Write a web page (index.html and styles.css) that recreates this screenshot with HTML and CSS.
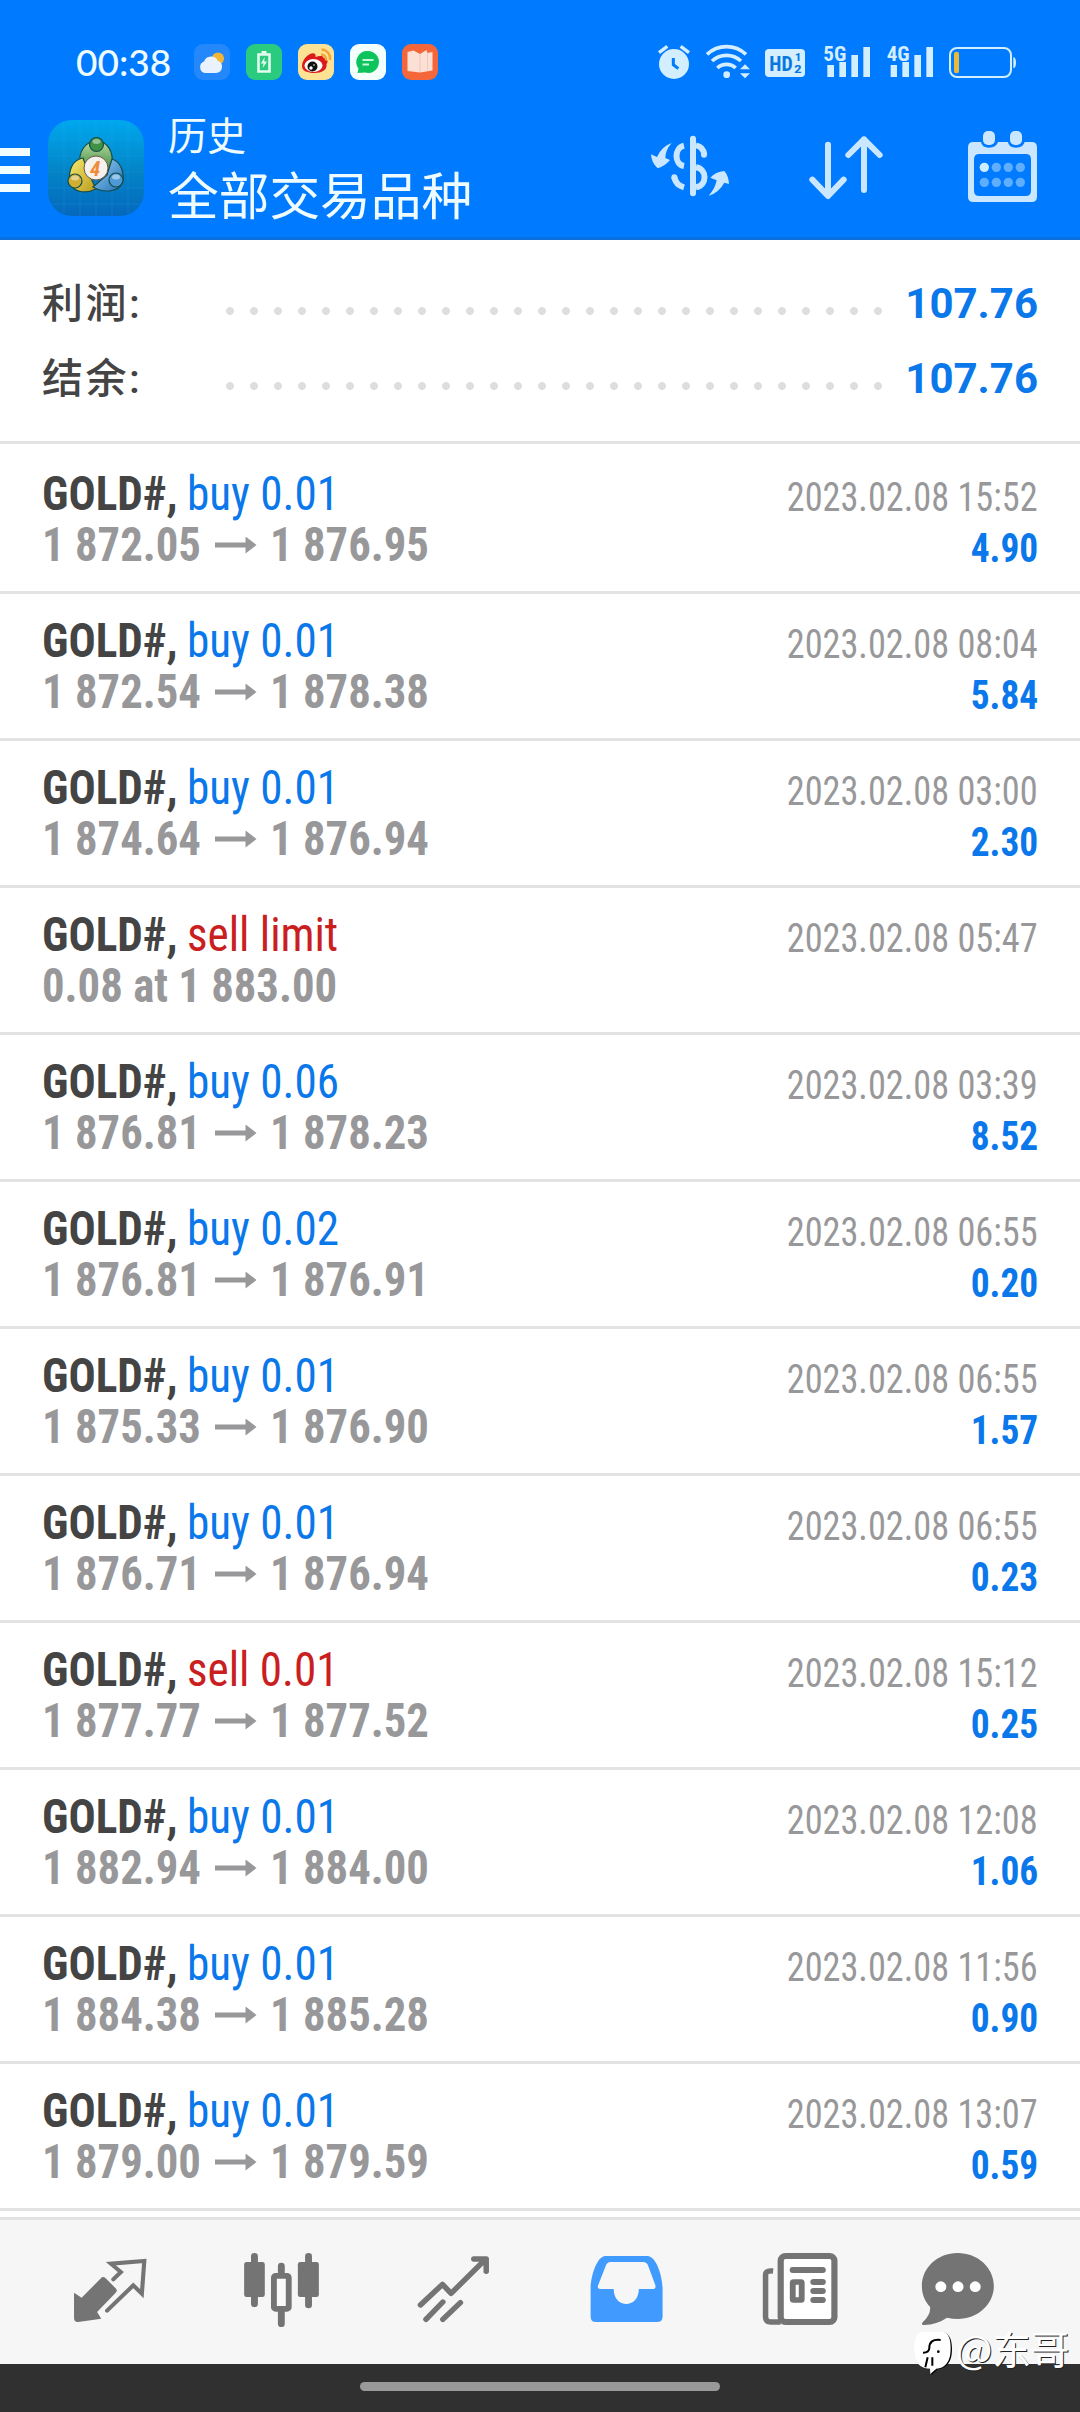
FILE: index.html
```
<!DOCTYPE html>
<html lang="zh-CN">
<head>
<meta charset="utf-8">
<title>历史</title>
<link rel="stylesheet" href="styles.css">
</head>
<body>
<header class="header">
  <div class="status">
    <span class="clock">00:38</span>
    <div class="apps">
      <svg viewBox="0 0 36 36"><rect width="36" height="36" rx="9" fill="#2487fa"/><circle cx="24" cy="14.500" r="6" fill="#f4b535"/><path d="M11 29a6 6 0 0 1-1-11.500 7.500 7.500 0 0 1 14-.5A6.200 6.200 0 0 1 22 29z" fill="#eaf3fd"/></svg>
      <svg viewBox="0 0 36 36"><rect width="36" height="36" rx="9" fill="#2bcb7f"/><path d="M12.500 10.500h11v17h-11z" fill="none" stroke="#e4fbef" stroke-width="2.600"/><path d="M15.500 7h5v3h-5z" fill="#e4fbef"/><path d="M18.800 13l-4 6.500h2.700l-.8 4.500 4.400-6.500h-2.900z" fill="#e4fbef"/></svg>
      <svg viewBox="0 0 36 36"><rect width="36" height="36" rx="9" fill="#fde293"/><path d="M4 22C4 14 14 7 17 10c1 1 .5 3 .5 3s8-3 8 1c4 0 5 4 3 6 1 6-5 9-12 9S4 27 4 22z" fill="#dc1a1a"/><ellipse cx="15.500" cy="21.500" rx="9" ry="6.500" fill="#fff"/><circle cx="14.500" cy="22.500" r="5" fill="#111"/><circle cx="13" cy="24" r="1.700" fill="#fff"/><circle cx="16" cy="21" r=".8" fill="#fff"/><path d="M23 10.500a5 5 0 0 1 5 6M23.500 5.500a9 9 0 0 1 8.500 10.500" fill="none" stroke="#f3a63a" stroke-width="2.400"/></svg>
      <svg viewBox="0 0 36 36"><rect width="36" height="36" rx="9" fill="#f3fffa"/><path d="M18 7a11 11 0 1 1-3 21.600L7.500 29l1-4.500A11 11 0 0 1 18 7z" fill="#0dc35c"/><path d="M12.500 16h11M12.500 20.500h6.500" stroke="#c9f7de" stroke-width="2"/></svg>
      <svg viewBox="0 0 36 36"><rect width="36" height="36" rx="9" fill="#f5673a"/><path d="M5.500 8l6-1.500L18 10l6.500-4 1 3 5-1v18.500L18 28.500 5.500 27z" fill="#fbe0d5"/><path d="M18 10v18M25.500 9v17" stroke="#f4c5b5" stroke-width="1"/></svg>
    </div>
    <div class="system">
      <svg class="s-alarm" viewBox="171 60 102 132"><circle cx="222" cy="132" r="45" fill="#d3eeff"/><path d="M177 98l25-19M267 98l-25-19" stroke="#d3eeff" stroke-width="10"/><path d="M220 114v20l15 12" fill="none" stroke="#007aff" stroke-width="9"/></svg>
      <svg class="s-wifi" viewBox="315 60 144 132"><g fill="none" stroke="#d3eeff" stroke-width="11"><path d="M321 103a85 85 0 0 1 117 0"/><path d="M336 123a64 64 0 0 1 87 0"/><path d="M352 144a40 40 0 0 1 55 0"/></g><circle cx="380" cy="164" r="10" fill="#d3eeff"/><path d="M420 148l15-15 15 15zM420 160h30l-15 15z" fill="#d3eeff"/></svg>
      <svg class="s-hd" viewBox="492 60 126 132"><rect x="495" y="87" width="120" height="84" rx="12" fill="#d3eeff"/><g fill="#0877e0" class="svg-text"><text x="508" y="152" font-size="63" textLength="70" lengthAdjust="spacingAndGlyphs">HD</text><text x="584" y="124" font-size="35" textLength="20" lengthAdjust="spacingAndGlyphs">1</text><text x="582" y="160" font-size="35" textLength="23" lengthAdjust="spacingAndGlyphs">2</text></g></svg>
      <svg class="s-sig" viewBox="669 60 144 132"><path d="M682 135h20v36h-20zM718 126h20v45h-20zM754 105h20v66h-20zM790 81h20v90h-20z" fill="#d3eeff"/><text class="svg-text" x="670" y="122" font-size="62" textLength="69" lengthAdjust="spacingAndGlyphs" fill="#d3eeff" stroke="#007aff" stroke-width="6" paint-order="stroke">5G</text></svg>
      <svg class="s-sig2" viewBox="858 60 144 132"><path d="M872 135h19v36h-19zM907 126h20v45h-20zM943 105h20v66h-20zM979 81h20v90h-20z" fill="#d3eeff"/><text class="svg-text" x="860" y="122" font-size="62" textLength="69" lengthAdjust="spacingAndGlyphs" fill="#d3eeff" stroke="#007aff" stroke-width="6" paint-order="stroke">4G</text></svg>
      <svg class="s-bat" viewBox="1044 60 207 132"><rect x="1050" y="84" width="183" height="87" rx="21" fill="none" stroke="#d3eeff" stroke-width="6"/><path d="M1240 111q8 2 8 17t-8 17z" fill="#d3eeff"/><rect x="1062" y="95" width="15" height="65" rx="7" fill="#e9b93c"/></svg>
    </div>
  </div>
  <div class="toolbar">
    <div class="menu"><i></i><i></i><i></i></div>
    <svg class="logo" viewBox="0 0 96 96">
      <defs>
        <linearGradient id="bg" x1="0" y1="0" x2="0" y2="1"><stop offset="0" stop-color="#00a8ee"/><stop offset=".55" stop-color="#0383c6"/><stop offset="1" stop-color="#0568bd"/></linearGradient>
        <linearGradient id="gr" x1="0" y1="0" x2="0" y2="1"><stop offset="0" stop-color="#b9dda0"/><stop offset="1" stop-color="#2a7c35"/></linearGradient>
        <linearGradient id="ye" x1="0" y1="0" x2="1" y2="1"><stop offset="0" stop-color="#f6ec70"/><stop offset="1" stop-color="#b99a1c"/></linearGradient>
        <linearGradient id="bl" x1="0" y1="0" x2="1" y2="1"><stop offset="0" stop-color="#9ed4f5"/><stop offset="1" stop-color="#1f6fb8"/></linearGradient>
      </defs>
      <rect width="96" height="96" rx="24" fill="url(#bg)"/>
      <path d="M16 2v92M32 0v96M48 0v96M64 0v96M80 2v92M2 20h92M0 36h96M0 52h96M0 68h96M4 84h88" stroke="#3db7ee" stroke-opacity=".16" stroke-width="1"/>
      <g stroke="#164c4c" stroke-width="1.200">
        <path d="M32 45c-2-14 6-24 16.500-24S66 31 64 46L54 55l-13-10z" fill="url(#gr)"/>
        <path d="M35 38c-11 2-15 13-13 24 3 11 16 12 26 7l-7-15z" fill="url(#ye)"/>
        <path d="M64 39c9 3 12 13 11 22-3 12-20 12-30 6l14-12z" fill="url(#bl)"/>
        <circle cx="48.500" cy="24.500" r="7" fill="#3f9144"/><circle cx="27" cy="61" r="7" fill="#cfae32"/><circle cx="68" cy="60" r="7" fill="#4d9bd6"/>
      </g>
      <g fill="#fff" fill-opacity=".45"><ellipse cx="48.500" cy="21.500" rx="4" ry="2.500"/><ellipse cx="27" cy="58" rx="4" ry="2.500"/><ellipse cx="68" cy="57" rx="4" ry="2.500"/></g>
      <circle cx="48" cy="48" r="12" fill="#f5f1ec" stroke="#6b5743"/>
      <text class="svg-text" x="42" y="55.500" font-size="21" font-style="italic" fill="#ef8c3c">4</text>
    </svg>
    <div class="titles"><span class="sub">历史</span><span class="main">全部交易品种</span></div>
    <div class="actions">
      <svg class="a-cur" viewBox="150 330 240 222"><path d="M215 369q-19 21-19 45l14 6q-16 19-37 25-19-17-20-42l18 8q14-32 44-42zM326 527q20-22 24-46l-19-8q16-18 42-20 13 15 14 39l-14-4q-17 31-47 39z" fill="#cae7ff"/><g fill="none" stroke="#cae7ff" stroke-width="18"><path d="M252 377c-30 7-30 56 0 61M223 471q4 24 29 31"/><path d="M288 376q22 4 25 28" /><path d="M288 442c34 5 34 55 0 60"/><path d="M279 356v164M223 472v1M312 403v1" stroke-linecap="round"/></g></svg>
      <svg class="a-sort" viewBox="624 330 228 222"><path d="M684 374v152M637 479l47 49 47-49M792 510V358M745 405l47-47 47 47" fill="none" stroke="#cae7ff" stroke-width="18" stroke-linecap="round" stroke-linejoin="round"/></svg>
      <svg class="a-cal" viewBox="1101 330 213 222"><path d="M1120 366h23q2 17 24 17t27-17h30q2 17 24 17t26-17h21q16 0 16 16v148q0 16-16 16h-175q-16 0-16-16V382q0-16 16-16zM1138 402q-16 0-16 16v94q0 16 16 16h139q16 0 16-16v-94q0-16-16-16z" fill="#cae7ff" fill-rule="evenodd"/><rect x="1149" y="333" width="36" height="42" rx="15" fill="#cae7ff"/><rect x="1230" y="333" width="36" height="42" rx="15" fill="#cae7ff"/><circle cx="1153" cy="442" r="14" fill="#cceeff"/><g fill="#5faeff"><circle cx="1189" cy="442" r="14"/><circle cx="1225" cy="442" r="14"/><circle cx="1261" cy="442" r="14"/><circle cx="1153" cy="487" r="14"/><circle cx="1189" cy="487" r="14"/><circle cx="1225" cy="487" r="14"/><circle cx="1261" cy="487" r="14"/></g></svg>
    </div>
  </div>
</header>

<section class="summary">
  <div class="sum-row"><span class="label">利润:</span><span class="dots"></span><b class="total">107.76</b></div>
  <div class="sum-row"><span class="label">结余:</span><span class="dots"></span><b class="total">107.76</b></div>
</section>

<main class="deals">
  <article class="deal"><div class="left"><p class="name"><b>GOLD#,</b><span class="buy">buy 0.01</span></p><p class="price"><span>1 872.05</span><i class="arrow"></i><span>1 876.95</span></p></div><div class="right"><time>2023.02.08 15:52</time><b>4.90</b></div></article>
  <article class="deal"><div class="left"><p class="name"><b>GOLD#,</b><span class="buy">buy 0.01</span></p><p class="price"><span>1 872.54</span><i class="arrow"></i><span>1 878.38</span></p></div><div class="right"><time>2023.02.08 08:04</time><b>5.84</b></div></article>
  <article class="deal"><div class="left"><p class="name"><b>GOLD#,</b><span class="buy">buy 0.01</span></p><p class="price"><span>1 874.64</span><i class="arrow"></i><span>1 876.94</span></p></div><div class="right"><time>2023.02.08 03:00</time><b>2.30</b></div></article>
  <article class="deal"><div class="left"><p class="name"><b>GOLD#,</b><span class="sell">sell limit</span></p><p class="price"><span>0.08 at 1 883.00</span></p></div><div class="right"><time>2023.02.08 05:47</time></div></article>
  <article class="deal"><div class="left"><p class="name"><b>GOLD#,</b><span class="buy">buy 0.06</span></p><p class="price"><span>1 876.81</span><i class="arrow"></i><span>1 878.23</span></p></div><div class="right"><time>2023.02.08 03:39</time><b>8.52</b></div></article>
  <article class="deal"><div class="left"><p class="name"><b>GOLD#,</b><span class="buy">buy 0.02</span></p><p class="price"><span>1 876.81</span><i class="arrow"></i><span>1 876.91</span></p></div><div class="right"><time>2023.02.08 06:55</time><b>0.20</b></div></article>
  <article class="deal"><div class="left"><p class="name"><b>GOLD#,</b><span class="buy">buy 0.01</span></p><p class="price"><span>1 875.33</span><i class="arrow"></i><span>1 876.90</span></p></div><div class="right"><time>2023.02.08 06:55</time><b>1.57</b></div></article>
  <article class="deal"><div class="left"><p class="name"><b>GOLD#,</b><span class="buy">buy 0.01</span></p><p class="price"><span>1 876.71</span><i class="arrow"></i><span>1 876.94</span></p></div><div class="right"><time>2023.02.08 06:55</time><b>0.23</b></div></article>
  <article class="deal"><div class="left"><p class="name"><b>GOLD#,</b><span class="sell">sell 0.01</span></p><p class="price"><span>1 877.77</span><i class="arrow"></i><span>1 877.52</span></p></div><div class="right"><time>2023.02.08 15:12</time><b>0.25</b></div></article>
  <article class="deal"><div class="left"><p class="name"><b>GOLD#,</b><span class="buy">buy 0.01</span></p><p class="price"><span>1 882.94</span><i class="arrow"></i><span>1 884.00</span></p></div><div class="right"><time>2023.02.08 12:08</time><b>1.06</b></div></article>
  <article class="deal"><div class="left"><p class="name"><b>GOLD#,</b><span class="buy">buy 0.01</span></p><p class="price"><span>1 884.38</span><i class="arrow"></i><span>1 885.28</span></p></div><div class="right"><time>2023.02.08 11:56</time><b>0.90</b></div></article>
  <article class="deal"><div class="left"><p class="name"><b>GOLD#,</b><span class="buy">buy 0.01</span></p><p class="price"><span>1 879.00</span><i class="arrow"></i><span>1 879.59</span></p></div><div class="right"><time>2023.02.08 13:07</time><b>0.59</b></div></article>
</main>

<nav class="tabs">
  <svg viewBox="69.700 90 499.500 432" preserveAspectRatio="none"><path d="M215 308l22 15 56-58q6-7 13-1l31 32q5 6-1 12l-54 58 12 20-67 10q-12 1-12-12z" fill="#747474"/><path d="M329 268l22-22-29-25 97-8-7 98-25-25-76 76" fill="none" stroke="#747474" stroke-width="12" stroke-linejoin="miter" stroke-linecap="round"/></svg>
  <svg viewBox="569.200 90 499.500 432" preserveAspectRatio="none"><g fill="#747474"><rect x="709" y="216" width="60" height="105" rx="7"/><rect x="865" y="216" width="61" height="105" rx="7"/></g><path d="M739 199v142M896 199v146M817 228v30M817 360v41" stroke="#747474" stroke-width="20" stroke-linecap="round"/><rect x="795.500" y="257.500" width="43" height="99" rx="5" fill="#fafafa" stroke="#747474" stroke-width="17"/></svg>
  <svg viewBox="1068.700 90 499.500 432" preserveAspectRatio="none"><path d="M1221 345l64-62 25 27 99-101M1376 207h36v37M1237 388l49-52M1286 388l51-50" fill="none" stroke="#747474" stroke-width="16" stroke-linecap="round" stroke-linejoin="round"/></svg>
  <svg viewBox="0 90 499.500 432" preserveAspectRatio="none"><path d="M190 198h122c26 0 44 62 44 98v84q0 16-16 16H163q-16 0-16-16v-84c0-36 18-98 43-98zM205 216q-10 0-14 11l-21 56q-6 14 5 14h39c0 60 73 60 73 0h40q12 0 7-14l-20-56q-4-11-14-11z" fill="#419bff" fill-rule="evenodd"/></svg>
  <svg viewBox="499.500 90 499.500 432" preserveAspectRatio="none"><rect x="699" y="198" width="156" height="198" rx="14" fill="#fff" stroke="#747474" stroke-width="18"/><path d="M677 243q-22-2-22 12v126q0 15 16 15h28" fill="none" stroke="#747474" stroke-width="16"/><path d="M734 240h87M794 276h27M794 303h27M794 330h27" stroke="#747474" stroke-width="18" stroke-linecap="round"/><rect x="734" y="276" width="26" height="54" rx="2" fill="#fff" stroke="#747474" stroke-width="17"/></svg>
  <svg viewBox="999 90 499.500 432" preserveAspectRatio="none"><path d="M1213 189c58 0 105 44 105 99s-47 99-105 99q-16 0-31-4-28 20-67 22c-7 0-7-5-3-9q23-22 21-45c-16-18-24-38-24-63 0-55 46-99 104-99z" fill="#747474"/><circle cx="1164" cy="290" r="16" fill="#fff"/><circle cx="1214" cy="290" r="16" fill="#fff"/><circle cx="1264" cy="290" r="16" fill="#fff"/></svg>
</nav>
<footer class="gesture"><span></span></footer>
<div class="watermark">
  <svg viewBox="42 36 117 132"><path d="M75 36h45c26 0 36 18 36 52 0 38-16 58-43 60l-18 18-3-18C60 146 44 126 44 92c0-36 8-56 31-56z" fill="#000"/><path d="M73 34h45c26 0 34 18 34 52 0 38-16 58-43 60l-18 16-1-16C60 146 42 126 42 92c0-36 8-58 31-58z" fill="#fff"/><path d="M122 60c-24-3-34 6-34 24 0 9-4 14-19 14M83 112l-7 30M97 112v25" fill="none" stroke="#000" stroke-width="6"/><circle cx="115" cy="95" r="4"/></svg>
  <span>@东哥</span>
</div>
</body>
</html>
```
FILE: styles.css
```
* { box-sizing: border-box; }
body {
  margin: 0;
  width: 1080px;
  height: 2412px;
  overflow: hidden;
  background: #fff;
  color: #444;
  font-family: Roboto, "Noto Sans CJK SC", sans-serif;
  display: flex;
  flex-direction: column;
  position: relative;
}
svg { display: block; flex: none; }
p { margin: 0; }
.svg-text { font-family: "Roboto Condensed", Roboto, sans-serif; font-weight: 700; }

.header { height: 240px; background: #007aff; border-bottom: 3px solid #0a6fdc; color: #effcff; }
.status { height: 100px; padding: 40px 63.500px 0 76px; display: flex; align-items: flex-start; }
.clock { width: 118px; height: 44px; line-height: 44px; font-family: Lato, sans-serif; font-size: 37px; font-weight: 500; white-space: nowrap; }
.apps { display: flex; gap: 16px; padding-top: 4px; }
.apps svg { width: 36px; height: 36px; }
.system { display: flex; margin-left: auto; }
.system svg { height: 44px; }
.s-alarm { width: 34px; margin-right: 14px; }
.s-wifi { width: 48px; margin-right: 11px; }
.s-hd { width: 42px; margin-right: 17px; }
.s-sig { width: 48px; margin-right: 15px; }
.s-sig2 { width: 48px; margin-right: 14px; }
.s-bat { width: 69px; }

.toolbar { height: 137px; display: flex; align-items: flex-start; }
.menu { width: 30px; padding-top: 48px; display: flex; flex-direction: column; gap: 10px; }
.menu i { height: 8px; background: #f2fdff; }
.logo { width: 96px; height: 96px; margin: 20px 0 0 18px; }
.titles { margin: 13px 0 0 24px; display: flex; flex-direction: column; white-space: nowrap; font-weight: 400; }
.sub { font-size: 39px; line-height: 48px; }
.main { font-size: 50.700px; line-height: 74px; }
.actions { margin-left: auto; padding: 30px 42px 0 0; display: flex; }
.actions svg { height: 74px; }
.a-cur { width: 80px; }
.a-sort { width: 76px; margin-left: 78px; }
.a-cal { width: 71px; margin-left: 83px; }

.summary { height: 204px; padding: 26px 42px 0; border-bottom: 3px solid #e3e3e3; }
.sum-row { height: 75px; display: flex; align-items: center; }
.label { width: 172px; font-size: 41px; line-height: 56px; letter-spacing: 2.500px; font-weight: 500; padding-top: 1px; height: 57px; }
.dots { width: 672px; height: 8px; margin: 15px auto 0 0; background: radial-gradient(circle at 16px 4px, #dedede 3.600px, transparent 4.200px) 0 0 / 24px 8px; }
.total { color: #0a78ea; font-size: 42px; }

.deals { height: 1773px; }
.deal { height: 147px; padding: 21px 42px 0; border-bottom: 3px solid #e3e3e3; display: flex; justify-content: space-between; }
.deal:first-child { height: 150px; padding-top: 24px; }
.name, .price, .right { font-family: "Roboto Condensed", Roboto, sans-serif; font-stretch: 75%; white-space: nowrap; }
.name, .price { display: flex; align-items: center; font-size: 48px; line-height: 51px; height: 51px; }
.name b, .name span, .price span { transform: scaleX(.94); transform-origin: left; }
.name b { width: 144.500px; }
.price { color: #98989a; font-weight: 700; }
.price span { width: 159px; transform: scaleX(.932); }
.buy { color: #0a78ea; }
.sell { color: #c9201f; }
.arrow { width: 42px; height: 17px; margin: 1px 13.500px 0; background: #98989a; clip-path: polygon(0 6px, 31px 6px, 31px 0, 42px 8.500px, 31px 17px, 31px 11px, 0 11px); }
.right { display: flex; flex-direction: column; align-items: flex-end; font-size: 40px; line-height: 51px; padding-top: 3.500px; color: #98989a; }
.right time { transform: scaleX(.907); transform-origin: right; }
.right b { color: #0a78ea; transform: scaleX(.935); transform-origin: right; }

.tabs { height: 147px; flex: none; border-top: 3px solid #e3e3e3; background: #f6f6f6; padding-left: 24px; display: flex; }
.tabs svg { width: 172px; height: 144px; }
.gesture { height: 48px; flex: none; background: #303030; display: flex; justify-content: center; padding-top: 18px; }
.gesture span { width: 360px; height: 9px; border-radius: 5px; background: #999; }
.watermark { position: absolute; left: 914px; top: 2332px; display: flex; gap: 3px; color: #fff; font: 38.500px/31px "Noto Sans CJK SC", sans-serif; text-shadow: 1px 1px 0 #222; white-space: nowrap; }
.watermark svg { width: 39px; height: 44px; }
```
